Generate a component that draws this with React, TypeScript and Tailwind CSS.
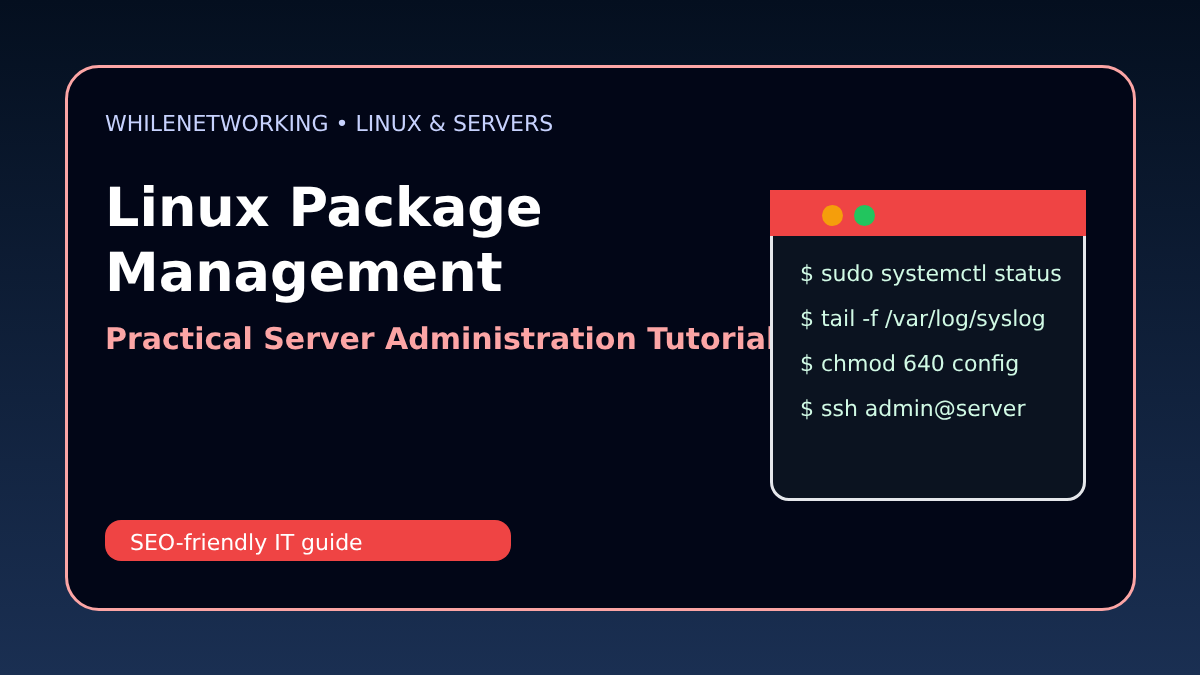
export default function App() {
  const lines = ["$ sudo systemctl status", "$ tail -f /var/log/syslog", "$ chmod 640 config", "$ ssh admin@server"];
  return (
    <div className="w-[1200px] h-[675px] overflow-hidden p-[65px] bg-[linear-gradient(180deg,#040f1f_0%,#1a2f52_100%)] font-['DejaVu_Sans',sans-serif] [text-rendering:geometricPrecision]">
      <div className="w-[1071px] h-[546px] rounded-[34px] border-[3px] border-[#fca5a5] bg-[#020617] pl-[37px] flex will-change-transform">
        <div className="w-[665px] shrink-0 flex flex-col whitespace-nowrap">
          <div className="mt-[44px] text-[22px] leading-[26px] text-[#c7d2fe]">WHILENETWORKING • LINUX &amp; SERVERS</div>
          <h1 className="mt-[37px] text-[54px] leading-[65px] font-bold text-white">Linux Package<br />Management</h1>
          <div className="mt-[17px] text-[30px] leading-[36px] font-bold text-[#fca5a5]">Practical Server Administration Tutorial</div>
          <div className="mt-auto mb-[47px] w-[406px] h-[41px] rounded-[16px] bg-[#ef4444] pl-[25px] text-[22px] leading-[47px] text-white">SEO-friendly IT guide</div>
        </div>
        <div className="relative shrink-0 w-[316px] h-[311px] mt-[122px] rounded-[19px] border-[3px] border-[#e5e7eb] bg-[#0b1320]">
          <div className="-mx-[3px] -mt-[3px] h-[46px] bg-[#ef4444] flex items-center pl-[52px] pt-[4px] gap-[11px]">
            <span className="w-[21px] h-[21px] rounded-full bg-[#f59e0b]" />
            <span className="w-[21px] h-[21px] rounded-full bg-[#22c55e]" />
          </div>
          <div className="pl-[27px] pt-[25px] flex flex-col gap-[18px] text-[22px] leading-[27px] text-[#d1fae5] whitespace-nowrap">
            {lines.map((l) => <div key={l}>{l}</div>)}
          </div>
        </div>
      </div>
    </div>
  );
}
